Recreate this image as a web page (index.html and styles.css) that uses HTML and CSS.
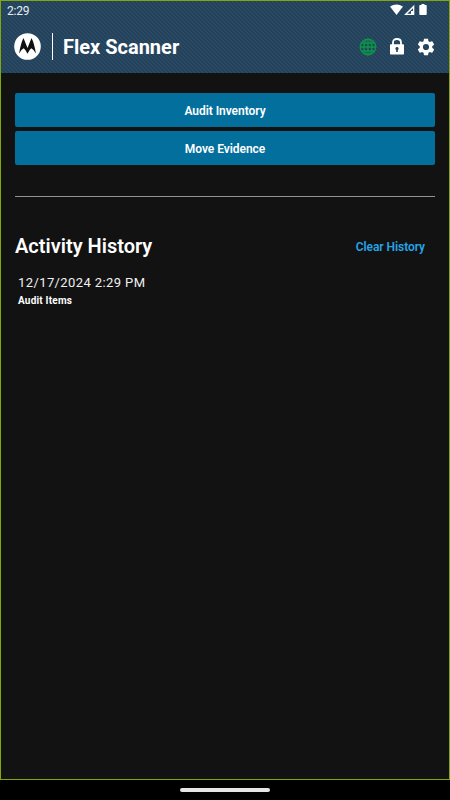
FILE: index.html
```html
<!DOCTYPE html>
<html lang="en">
<head>
<meta charset="utf-8">
<title>Flex Scanner</title>
<link rel="stylesheet" href="styles.css">
</head>
<body>
<div class="app">
  <header class="header">
    <div class="status">
      <span class="clock">2:29</span>
      <svg class="status-icons" width="38" height="12" viewBox="0 0 38 12" fill="#fff">
        <path d="M0 2.600Q6.500-1.700 13 2.600L6.500 11Z"/>
        <path d="M24.300.8V11H14ZM23 4.200 17.200 9.800H21V7H23Z" fill-rule="evenodd"/>
        <path d="M31.500 0h3v1H36q.7 0 .7.7v8.600q0 .7-.7.7h-6q-.7 0-.7-.7V1.700q0-.7.7-.7h1.500Z"/>
      </svg>
    </div>
    <div class="toolbar">
      <svg class="logo" width="27" height="27" viewBox="0 0 27 27">
        <circle cx="13.500" cy="13.500" r="13.300" fill="#fff"/>
        <path d="M9.500 5 13.500 15 17.500 5Q20.200 10 21.900 20.500Q20.200 16.800 17.300 15.300Q15.200 16.800 13.500 20.800Q11.800 16.800 9.700 15.300Q6.800 16.800 5.100 20.500Q6.800 10 9.500 5Z" fill="#111"/>
      </svg>
      <span class="separator"></span>
      <h1 class="title">Flex Scanner</h1>
      <div class="actions">
        <svg class="globe" width="18" height="18" viewBox="0 0 18 18" fill="none" stroke="#099847" stroke-width="1.300">
          <circle cx="9" cy="9" r="7.800"/>
          <ellipse cx="9" cy="9" rx="4" ry="7.800"/>
          <path d="M9 1v16M1 9h16M2.500 5h13M2.500 13h13"/>
        </svg>
        <svg width="14" height="17" viewBox="0 0 14 17">
          <path d="M3 7V4.500Q3 1 7 1t4 3.500V7" fill="none" stroke="#fff" stroke-width="1.800"/>
          <rect y="6.300" width="14" height="10.200" rx=".8" fill="#fff"/>
          <path d="M7 9a1.600 1.600 0 0 1 .8 3V14H6.200V12A1.600 1.600 0 0 1 7 9Z" fill="#24425c"/>
        </svg>
        <svg width="20" height="20" viewBox="0 0 24 24" fill="#fff">
          <path d="M19.430 12.980c.04-.32.07-.64.07-.98s-.03-.66-.07-.98l2.110-1.650c.19-.15.24-.42.12-.64l-2-3.460c-.12-.22-.39-.3-.61-.22l-2.490 1c-.52-.4-1.080-.73-1.690-.98l-.38-2.650C14.460 2.180 14.250 2 14 2h-4c-.25 0-.46.18-.49.42l-.38 2.650c-.61.25-1.170.59-1.690.98l-2.490-1c-.23-.09-.49 0-.61.22l-2 3.460c-.13.22-.07.49.12.64l2.110 1.650c-.04.32-.07.65-.07.98s.03.66.07.98l-2.110 1.650c-.19.15-.24.42-.12.64l2 3.460c.12.22.39.3.61.22l2.490-1c.52.4 1.080.73 1.690.98l.38 2.650c.03.24.24.42.49.42h4c.25 0 .46-.18.49-.42l.38-2.650c.61-.25 1.170-.59 1.690-.98l2.490 1c.23.09.49 0 .61-.22l2-3.460c.12-.22.07-.49-.12-.64ZM12 15.700a3.700 3.700 0 1 1 0-7.400 3.700 3.700 0 0 1 0 7.400Z" fill-rule="evenodd"/>
        </svg>
      </div>
    </div>
  </header>
  <main class="content">
    <button class="button">Audit Inventory</button>
    <button class="button">Move Evidence</button>
    <hr class="rule">
    <div class="history-head">
      <h2 class="history-title">Activity History</h2>
      <a class="clear">Clear History</a>
    </div>
    <div class="entry">
      <div class="entry-date">12/17/2024 2:29 PM</div>
      <div class="entry-name">Audit Items</div>
    </div>
  </main>
</div>
<footer class="nav"><span class="handle"></span></footer>
</body>
</html>
```
FILE: styles.css
```css
* { box-sizing: border-box; }
body {
  margin: 0;
  height: 800px;
  background: #000;
  color: #fff;
  font-family: Roboto, sans-serif;
  overflow: hidden;
}
.app {
  height: 780px;
  border: 1px solid #80a80b;
  background: #121212;
}
.header {
  height: 72px;
  background: repeating-linear-gradient(45deg, #23415c 0 1.414px, #2a4a62 1.414px 2.828px);
}
.status {
  display: flex;
  justify-content: space-between;
  height: 18px;
  padding: 3px 21px 0 6px;
}
.clock { font-size: 12px; line-height: 14px; letter-spacing: -.2px; color: #e8edf2; }
.status-icons { display: block; }
.toolbar {
  display: flex;
  align-items: center;
  height: 55px;
  padding: 0 13px 0 13px;
}
.separator {
  width: 1px;
  height: 27px;
  margin: 0 10px 0 11px;
  background: #fff;
}
.title { margin: 0; padding-top: 1px; font-size: 20px; line-height: 24px; font-weight: 700; }
.actions {
  display: flex;
  align-items: center;
  gap: 12px;
  margin-left: auto;
}
.globe { margin-right: 1px; }
.content { padding: 20px 14px 0; }
.button {
  display: block;
  width: 100%;
  height: 34px;
  margin: 0 0 4px;
  padding: 2px 0 0;
  border: 0;
  border-radius: 2px;
  background: #036f9d;
  color: #fff;
  font: 600 12px/32px Roboto, sans-serif;
  letter-spacing: -.05px;
}
.rule { height: 1px; margin: 31px 0 36px; border: 0; background: #929292; }
.history-head {
  display: flex;
  align-items: center;
  justify-content: space-between;
  height: 27px;
  padding-right: 10px;
}
.history-title { margin: 0; font-size: 20px; line-height: 27px; font-weight: 600; }
.clear { color: #26a4e4; font-size: 12px; font-weight: 600; letter-spacing: -.05px; }
.entry { padding: 14px 0 0 3px; }
.entry-date { font-size: 13px; line-height: 18px; letter-spacing: .4px; color: #f0f0f0; }
.entry-name { padding-top: 1px; font-size: 10px; line-height: 16px; font-weight: 700; letter-spacing: .2px; }
.nav {
  display: flex;
  justify-content: center;
  height: 20px;
  padding-top: 8px;
}
.handle { width: 90px; height: 4px; border-radius: 2px; background: #e6e6e6; }
```
